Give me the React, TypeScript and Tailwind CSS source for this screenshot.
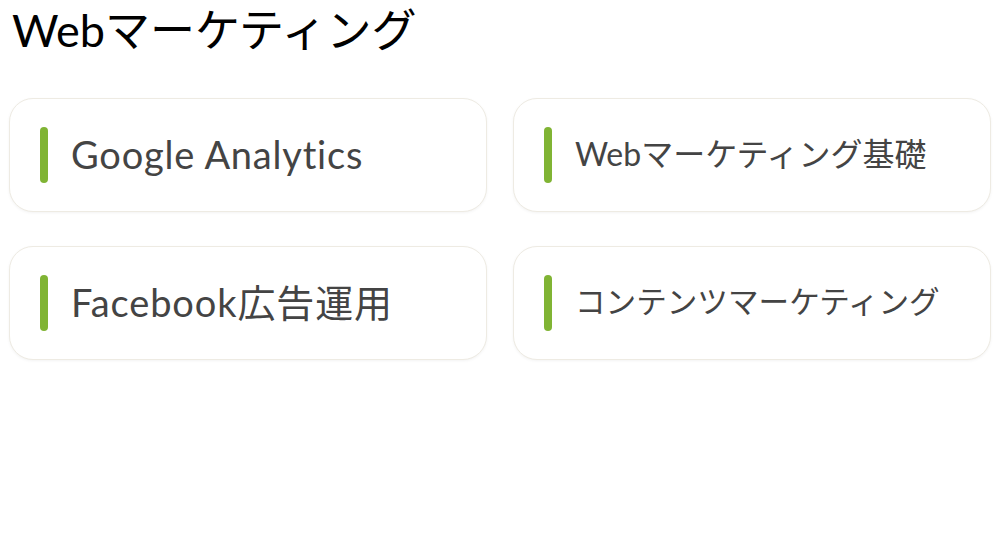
import React from "react";

const items = [
  { label: "Google Analytics", size: "text-[38px] tracking-[0.8px]" },
  { label: "Webマーケティング基礎", size: "text-[32px]" },
  { label: "Facebook広告運用", size: "text-[38px] tracking-[0.9px]" },
  { label: "コンテンツマーケティング", size: "text-[30.6px]" },
];

export default function App() {
  return (
    <div className="w-[1000px] h-[538px] bg-white" style={{ fontFamily: 'Lato, "Noto Sans CJK JP", sans-serif' }}>
      <h1 className="pl-[12px] pt-[3px] text-[45px] leading-[55px] text-black font-normal">Webマーケティング</h1>
      <div className="grid grid-cols-2 gap-x-[26px] gap-y-[34px] px-[9px] pt-[40px]">
        {items.map((it) => (
          <div
            key={it.label}
            className="h-[114px] rounded-[24px] border border-[#eeebe3] bg-white shadow-[0_1px_3px_rgba(0,0,0,0.05)] flex items-center pl-[30px]"
          >
            <div className="w-[8px] h-[56px] rounded-full bg-[#80b434]" />
            <span className={`ml-[23px] ${it.size} text-[#444444] leading-none pb-[2px]`}>{it.label}</span>
          </div>
        ))}
      </div>
    </div>
  );
}
